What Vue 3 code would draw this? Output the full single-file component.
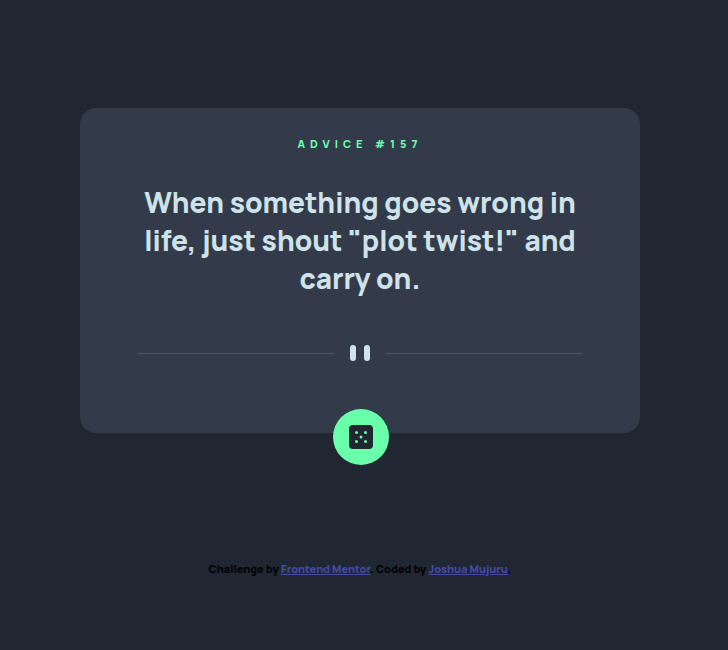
<script setup>
import { ref } from 'vue'

const advices = [
  { id: 157, text: 'When something goes wrong in life, just shout "plot twist!" and carry on.' },
]
const index = ref(0)
const roll = () => {
  index.value = (index.value + 1) % advices.length
}
</script>

<template>
  <div class="page">
    <main class="card">
      <h1 class="label">ADVICE #{{ advices[index].id }}</h1>
      <p class="quote">{{ advices[index].text }}</p>
      <svg class="divider" viewBox="0 0 444 16" aria-hidden="true">
        <path fill="#4f5669" d="M0 8h196v1H0zM248 8h196v1H248z" />
        <rect x="212" width="6" height="16" rx="3" fill="#cee3e9" />
        <rect x="226" width="6" height="16" rx="3" fill="#cee3e9" />
      </svg>
      <button class="dice" type="button" aria-label="New advice" @click="roll">
        <svg width="24" height="24" viewBox="0 0 24 24" aria-hidden="true">
          <rect width="24" height="24" rx="4" fill="#202632" />
          <g fill="#6affab">
            <circle cx="7.5" cy="7.5" r="1.5" />
            <circle cx="16.5" cy="7.5" r="1.5" />
            <circle cx="12" cy="12" r="1.5" />
            <circle cx="7.5" cy="16.5" r="1.5" />
            <circle cx="16.5" cy="16.5" r="1.5" />
          </g>
        </svg>
      </button>
    </main>
    <footer class="attribution">
      Challenge by <a href="#">Frontend Mentor</a>. Coded by <a href="#">Joshua Mujuru</a>.
    </footer>
  </div>
</template>

<style>
body {
  background: #202632;
}
</style>

<style scoped>
.page {
  display: flex;
  flex-direction: column;
  align-items: center;
  padding: 108px 88px 0 80px;
  font-family: Manrope, "Open Sans", sans-serif;
  font-weight: 800;
}
.card {
  display: flex;
  flex-direction: column;
  align-items: center;
  box-sizing: border-box;
  width: 100%;
  max-width: 560px;
  padding: 28px 58px 0;
  border-radius: 16px;
  background: #333a49;
  text-align: center;
}
.label {
  margin: 0;
  font-size: 11px;
  font-weight: 800;
  line-height: 16px;
  letter-spacing: 5px;
  color: #6affab;
}
.quote {
  margin: 31px 0 48px;
  font-size: 28px;
  line-height: 38px;
  color: #cee3e9;
}
.divider {
  display: block;
  width: 100%;
}
.dice {
  display: flex;
  align-items: center;
  justify-content: center;
  width: 56px;
  height: 56px;
  margin: 48px 0 -32px 2px;
  padding: 0;
  border: 0;
  border-radius: 50%;
  background: #6affab;
  cursor: pointer;
}
.attribution {
  margin-top: 128px;
  font-size: 11px;
  line-height: 16px;
  color: #000;
}
.attribution a {
  color: #444da3;
}
</style>
